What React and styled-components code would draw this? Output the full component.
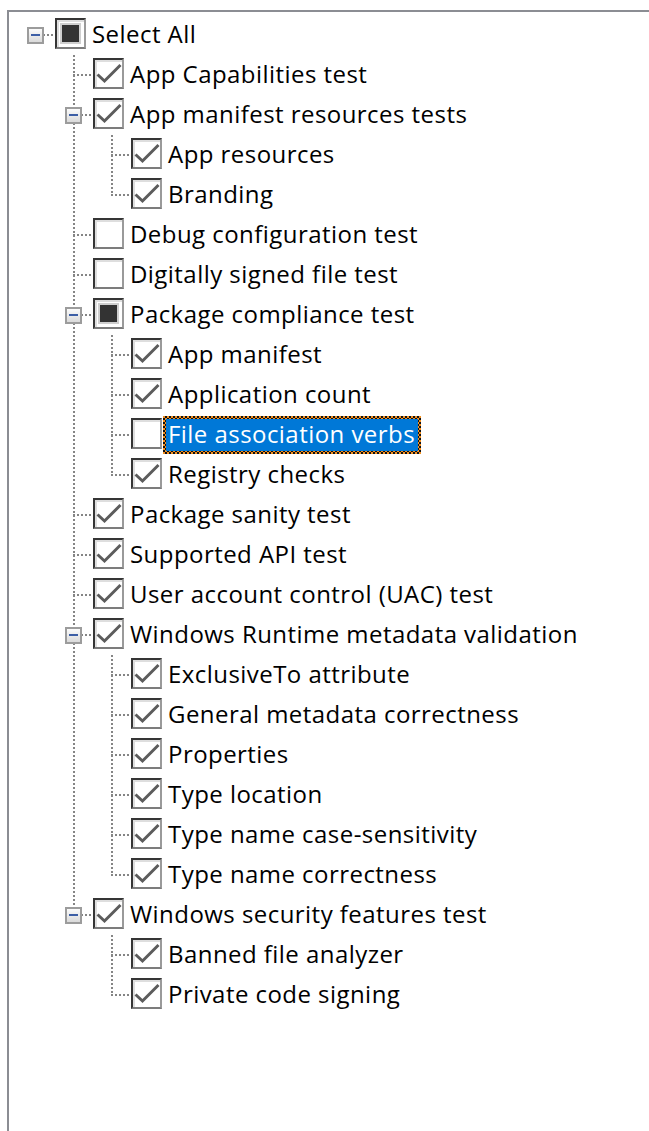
import React from "react";
import styled, { createGlobalStyle, css } from "styled-components";

const GlobalStyle = createGlobalStyle`
  html, body {
    margin: 0;
    padding: 0;
    overflow: hidden;
    background: #fff;
  }
  body {
    font-family: "Open Sans", "Noto Sans", sans-serif;
  }
`;

// TREE DATA
const tree = {
  label: "Select All",
  state: "mixed",
  children: [
    { label: "App Capabilities test", state: "on" },
    {
      label: "App manifest resources tests",
      state: "on",
      children: [
        { label: "App resources", state: "on" },
        { label: "Branding", state: "on" },
      ],
    },
    { label: "Debug configuration test", state: "off" },
    { label: "Digitally signed file test", state: "off" },
    {
      label: "Package compliance test",
      state: "mixed",
      children: [
        { label: "App manifest", state: "on" },
        { label: "Application count", state: "on" },
        { label: "File association verbs", state: "off", selected: true },
        { label: "Registry checks", state: "on" },
      ],
    },
    { label: "Package sanity test", state: "on" },
    { label: "Supported API test", state: "on" },
    { label: "User account control (UAC) test", state: "on" },
    {
      label: "Windows Runtime metadata validation",
      state: "on",
      children: [
        { label: "ExclusiveTo attribute", state: "on" },
        { label: "General metadata correctness", state: "on" },
        { label: "Properties", state: "on" },
        { label: "Type location", state: "on" },
        { label: "Type name case-sensitivity", state: "on" },
        { label: "Type name correctness", state: "on" },
      ],
    },
    {
      label: "Windows security features test",
      state: "on",
      children: [
        { label: "Banned file analyzer", state: "on" },
        { label: "Private code signing", state: "on" },
      ],
    },
  ],
};

const INDENT = 38;
const DOT = "#858585";

const CheckMark = () => (
  <svg width="27" height="27" viewBox="0 0 27 27">
    <polyline
      points="2.5,14.5 9.5,21 25.5,5"
      fill="none"
      stroke="#5c5c5c"
      strokeWidth="3"
    />
  </svg>
);

const TreeNode = ({ node, level, last }) => {
  const hasChildren = !!node.children;
  return (
    <Item $level={level} $last={last}>
      <Row $level={level}>
        {hasChildren ? (
          <Expander>
            <Minus />
          </Expander>
        ) : (
          <ExpanderSlot />
        )}
        <Checkbox>
          {node.state === "on" && <CheckMark />}
          {node.state === "mixed" && <MixedFill />}
        </Checkbox>
        <Label $selected={node.selected}>{node.label}</Label>
      </Row>
      {hasChildren && (
        <TreeList>
          {node.children.map((child, index) => (
            <TreeNode
              key={child.label}
              node={child}
              level={level + 1}
              last={index === node.children.length - 1}
            />
          ))}
        </TreeList>
      )}
    </Item>
  );
};

const App = () => {
  return (
    <>
      <GlobalStyle />
      <Frame>
        <TreeList>
          <TreeNode node={tree} level={0} last />
        </TreeList>
      </Frame>
    </>
  );
};

const Frame = styled.div`
  margin: 10px 0 0 7px;
  padding-top: 3px;
  min-height: calc(100vh - 10px);
  box-sizing: border-box;
  border-top: 2px solid #8b8d93;
  border-left: 2px solid #8b8d93;
`;

const TreeList = styled.ul`
  list-style: none;
  margin: 0;
  padding: 0;
`;

const Item = styled.li`
  position: relative;

  ${({ $level }) =>
    $level > 0 &&
    css`
      &::before {
        content: "";
        position: absolute;
        top: 0;
        left: ${26 + INDENT * $level}px;
        width: 2px;
        height: ${({ $last }) => ($last ? "20px" : "100%")};
        background-image: linear-gradient(to bottom, ${DOT} 50%, transparent 50%);
        background-size: 2px 4px;
      }
    `}

  &::after {
    content: "";
    position: absolute;
    top: 19px;
    left: ${({ $level }) => 26 + INDENT * $level}px;
    width: 20px;
    height: 2px;
    background-image: linear-gradient(to right, ${DOT} 50%, transparent 50%);
    background-size: 4px 2px;
  }
`;

const Row = styled.div`
  position: relative;
  z-index: 1;
  display: flex;
  align-items: center;
  height: 40px;
  padding-left: ${({ $level }) => 18 + INDENT * $level}px;
`;

const ExpanderSlot = styled.span`
  flex: none;
  width: 17px;
  height: 17px;
`;

const Expander = styled(ExpanderSlot)`
  display: flex;
  align-items: center;
  justify-content: center;
  box-sizing: border-box;
  border: 2px solid #9c9c9c;
  background: linear-gradient(to bottom, #fbfbfb, #dadada);
`;

const Minus = styled.span`
  width: 9px;
  height: 2px;
  background: #3d5fa6;
`;

const Checkbox = styled.span`
  flex: none;
  align-self: flex-start;
  display: flex;
  align-items: center;
  justify-content: center;
  width: 31px;
  height: 31px;
  margin: 3px 0 0 11px;
  box-sizing: border-box;
  border-style: solid;
  border-width: 2px;
  border-color: #353535 #9a9a9a #7c7c7c #353535;
  background: #fff;
  box-shadow: inset 2px 2px 0 #dedede;
`;

const MixedFill = styled.span`
  width: 17px;
  height: 17px;
  background: #333;
  box-shadow: 0 0 0 2px #cfcfcf;
`;

const Label = styled.span`
  flex: none;
  margin-left: 1px;
  padding: 0 3px 0 2px;
  height: 38px;
  line-height: 30px;
  box-sizing: border-box;
  border: 3px solid transparent;
  font-size: 24px;
  letter-spacing: 0.45px;
  color: #000;
  white-space: nowrap;

  ${({ $selected }) =>
    $selected &&
    css`
      color: #fff;
      background: linear-gradient(#0078d7, #0078d7) padding-box,
        repeating-conic-gradient(#111 0 25%, #f39021 0 50%) 0 0 / 4px 4px border-box;
    `}
`;

export default App;
